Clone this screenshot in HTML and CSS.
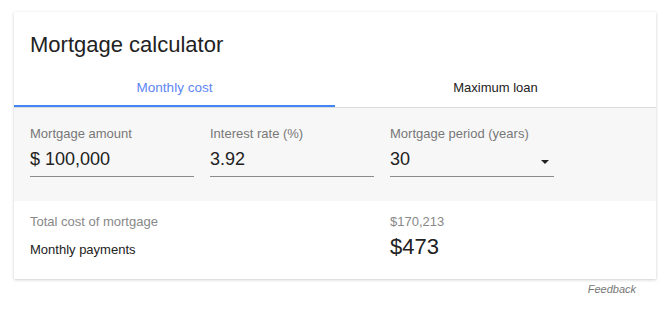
FILE: index.html
```html
<!DOCTYPE html>
<html>
<head>
<meta charset="utf-8">
<link rel="stylesheet" href="styles.css">
</head>
<body>
<div class="wrap">
  <div class="card">
    <div class="title">Mortgage calculator</div>
    <div class="tabs">
      <div class="tab active">Monthly cost</div>
      <div class="tab">Maximum loan</div>
    </div>
    <div class="inputs">
      <div class="field">
        <div class="label">Mortgage amount</div>
        <div class="value">$ 100,000</div>
      </div>
      <div class="field">
        <div class="label">Interest rate (%)</div>
        <div class="value">3.92</div>
      </div>
      <div class="field">
        <div class="label">Mortgage period (years)</div>
        <div class="value select"><span>30</span><span class="arrow"></span></div>
      </div>
    </div>
    <div class="results">
      <div class="row">
        <div class="rlabel muted">Total cost of mortgage</div>
        <div class="rvalue muted">$170,213</div>
      </div>
      <div class="row second">
        <div class="rlabel">Monthly payments</div>
        <div class="rvalue big">$473</div>
      </div>
    </div>
  </div>
  <div class="feedback">Feedback</div>
</div>
</body>
</html>
```
FILE: styles.css
```css
html, body { margin: 0; padding: 0; background: #fff; }
body { font-family: "Liberation Sans", Arial, sans-serif; color: #222; }
.wrap { padding: 12px 14px 0 14px; width: 642px; }
.card {
  background: #fff;
  box-shadow: 0 1px 3px rgba(0,0,0,0.18), 0 0 1px rgba(0,0,0,0.08);
}
.title {
  font-size: 22px;
  line-height: 26px;
  padding: 20px 16px 0 16px;
  color: #222;
}
.tabs {
  display: flex;
  margin-top: 15px;
  border-bottom: 1px solid #dcdcdc;
}
.tab {
  flex: 1;
  text-align: center;
  font-size: 13px;
  line-height: 16px;
  padding: 7px 0 9px 0;
  color: #222;
  border-bottom: 2px solid transparent;
}
.tab.active { color: #5d86f5; border-bottom-color: #4285f4; font-size: 13.5px; }
.inputs {
  background: #f7f7f7;
  display: flex;
  gap: 16px;
  padding: 18px 16px 24px 16px;
}
.field { width: 164px; }
.label { font-size: 13px; line-height: 15px; color: #777; }
.value {
  font-size: 18px;
  line-height: 22px;
  color: #222;
  margin-top: 7px;
  padding-bottom: 6px;
  border-bottom: 1px solid #8a8a8a;
}
.select { display: flex; justify-content: space-between; align-items: center; }
.arrow {
  width: 0; height: 0;
  border-left: 4px solid transparent;
  border-right: 4px solid transparent;
  border-top: 4px solid #222;
  margin-right: 5px;
  margin-top: 6px;
}
.results { padding: 13px 16px 19px 16px; }
.row { display: flex; align-items: baseline; }
.row.second { margin-top: 5px; }
.rlabel { width: 360px; font-size: 13px; line-height: 15px; color: #222; }
.rvalue { font-size: 13px; line-height: 15px; }
.muted { color: #888; }
.rvalue.big { font-size: 22px; line-height: 26px; color: #222; }
.feedback {
  text-align: right;
  font-size: 11px;
  line-height: 13px;
  font-style: italic;
  color: #777;
  padding: 4px 20px 0 0;
}
```
